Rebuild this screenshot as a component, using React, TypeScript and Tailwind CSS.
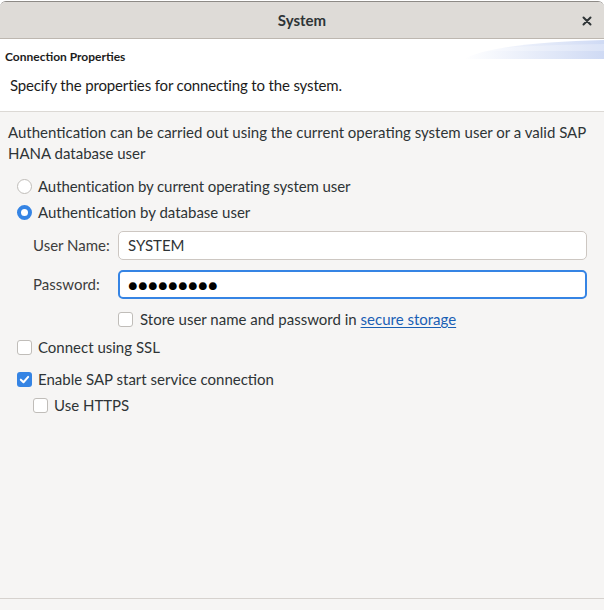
import { FC } from 'react';

const Check: FC<{ checked?: boolean }> = ({ checked }) =>
  checked ? (
    <span className="w-[15px] h-[15px] rounded-[3px] bg-[#3584e4] flex items-center justify-center shrink-0">
      <svg width="11" height="11" viewBox="0 0 12 12">
        <path d="M2 6.2 L4.9 9 L10 3.2" fill="none" stroke="white" strokeWidth="2.2" strokeLinecap="round" strokeLinejoin="round" />
      </svg>
    </span>
  ) : (
    <span className="w-[15px] h-[15px] rounded-[3px] border border-[#c0bdb9] bg-white shrink-0" />
  );

const Radio: FC<{ checked?: boolean }> = ({ checked }) =>
  checked ? (
    <span className="w-[15px] h-[15px] rounded-full border-[4px] border-[#3584e4] bg-white shrink-0" />
  ) : (
    <span className="w-[15px] h-[15px] rounded-full border border-[#c0bdb9] bg-white shrink-0" />
  );

const App: FC = () => {
  return (
    <div className="w-[604px] h-[610px] bg-white pt-px overflow-hidden font-['Lato',sans-serif] text-[15px] text-[#2e3436]">
      <div className="h-full flex flex-col rounded-t-[6px] border-t border-[#8d8a86] bg-[#f6f5f4] overflow-hidden">
        {/* Title bar */}
        <div className="h-[37px] shrink-0 relative flex items-center justify-center bg-[#dedbd7] border-b border-[#bdb7b0]">
          <span className="font-bold text-[15px] text-[#2e3436]">System</span>
          <svg className="absolute right-[12px] top-[14px]" width="10" height="10" viewBox="0 0 10 10">
            <path d="M1.5 1.5 L8.5 8.5 M8.5 1.5 L1.5 8.5" stroke="#2e3436" strokeWidth="2" strokeLinecap="round" />
          </svg>
        </div>

        {/* Page header */}
        <div className="h-[73px] shrink-0 relative bg-white border-b border-[#dcd9d5]">
          <svg className="absolute right-0 top-0" width="140" height="20" viewBox="0 0 140 20">
            <defs>
              <linearGradient id="band" x1="0" y1="0" x2="1" y2="0">
                <stop offset="0" stopColor="#ffffff" />
                <stop offset="1" stopColor="#cfdaf4" />
              </linearGradient>
            </defs>
            <path d="M0 20 Q30 4 140 1 L140 20 Z" fill="url(#band)" />
            <path d="M10 12 Q50 6 140 5 L140 12 Z" fill="#ffffff" opacity="0.25" />
          </svg>
          <div className="pl-[5px] pt-[10px] text-[12px] font-bold text-[#1c1c1c] leading-[16px]">Connection Properties</div>
          <div className="pl-[10px] pt-[10px] leading-[20px] text-[#1c1c1c] tracking-[-0.15px]">Specify the properties for connecting to the system.</div>
        </div>

        {/* Body */}
        <div className="flex-1 flex flex-col">
          <p className="px-[8px] pt-[10px] leading-[21px]">
            Authentication can be carried out using the current operating system user or a valid SAP HANA database user
          </p>

          <div className="mt-[12px] pl-[17px] flex flex-col gap-[6px]">
            <label className="flex items-center gap-[6px] h-[20px]">
              <Radio />
              <span className="tracking-[-0.1px]">Authentication by current operating system user</span>
            </label>
            <label className="flex items-center gap-[6px] h-[20px]">
              <Radio checked />
              <span>Authentication by database user</span>
            </label>
          </div>

          <div className="mt-[9px] pl-[33px] pr-[17px] flex flex-col gap-[10px]">
            <div className="flex items-center">
              <span className="w-[85px] text-[#3d3d3d]">User Name:</span>
              <div className="flex-1 h-[29px] flex items-center px-[9px] bg-white border border-[#cdc7c2] rounded-[5px]">SYSTEM</div>
            </div>
            <div className="flex items-center">
              <span className="w-[85px] text-[#3d3d3d]">Password:</span>
              <div className="flex-1 h-[29px] flex items-center px-[8px] bg-white border-2 border-[#3584e4] rounded-[5px] text-[16px] tracking-[0.4px] text-black">
                ●●●●●●●●●
              </div>
            </div>
          </div>

          <label className="mt-[10px] ml-[118px] flex items-center gap-[7px] h-[20px]">
            <Check />
            <span>
              Store user name and password in{' '}
              <a href="#" className="text-[#1a5fb4] underline underline-offset-2">secure storage</a>
            </span>
          </label>

          <label className="mt-[8px] ml-[17px] flex items-center gap-[6px] h-[20px]">
            <Check />
            <span>Connect using SSL</span>
          </label>

          <label className="mt-[12px] ml-[17px] flex items-center gap-[6px] h-[20px]">
            <Check checked />
            <span>Enable SAP start service connection</span>
          </label>

          <label className="mt-[6px] ml-[33px] flex items-center gap-[6px] h-[20px]">
            <Check />
            <span>Use HTTPS</span>
          </label>

          <div className="mt-auto mb-[11px] border-b border-[#d6d2ce]" />
        </div>
      </div>
    </div>
  );
};

export default App;
